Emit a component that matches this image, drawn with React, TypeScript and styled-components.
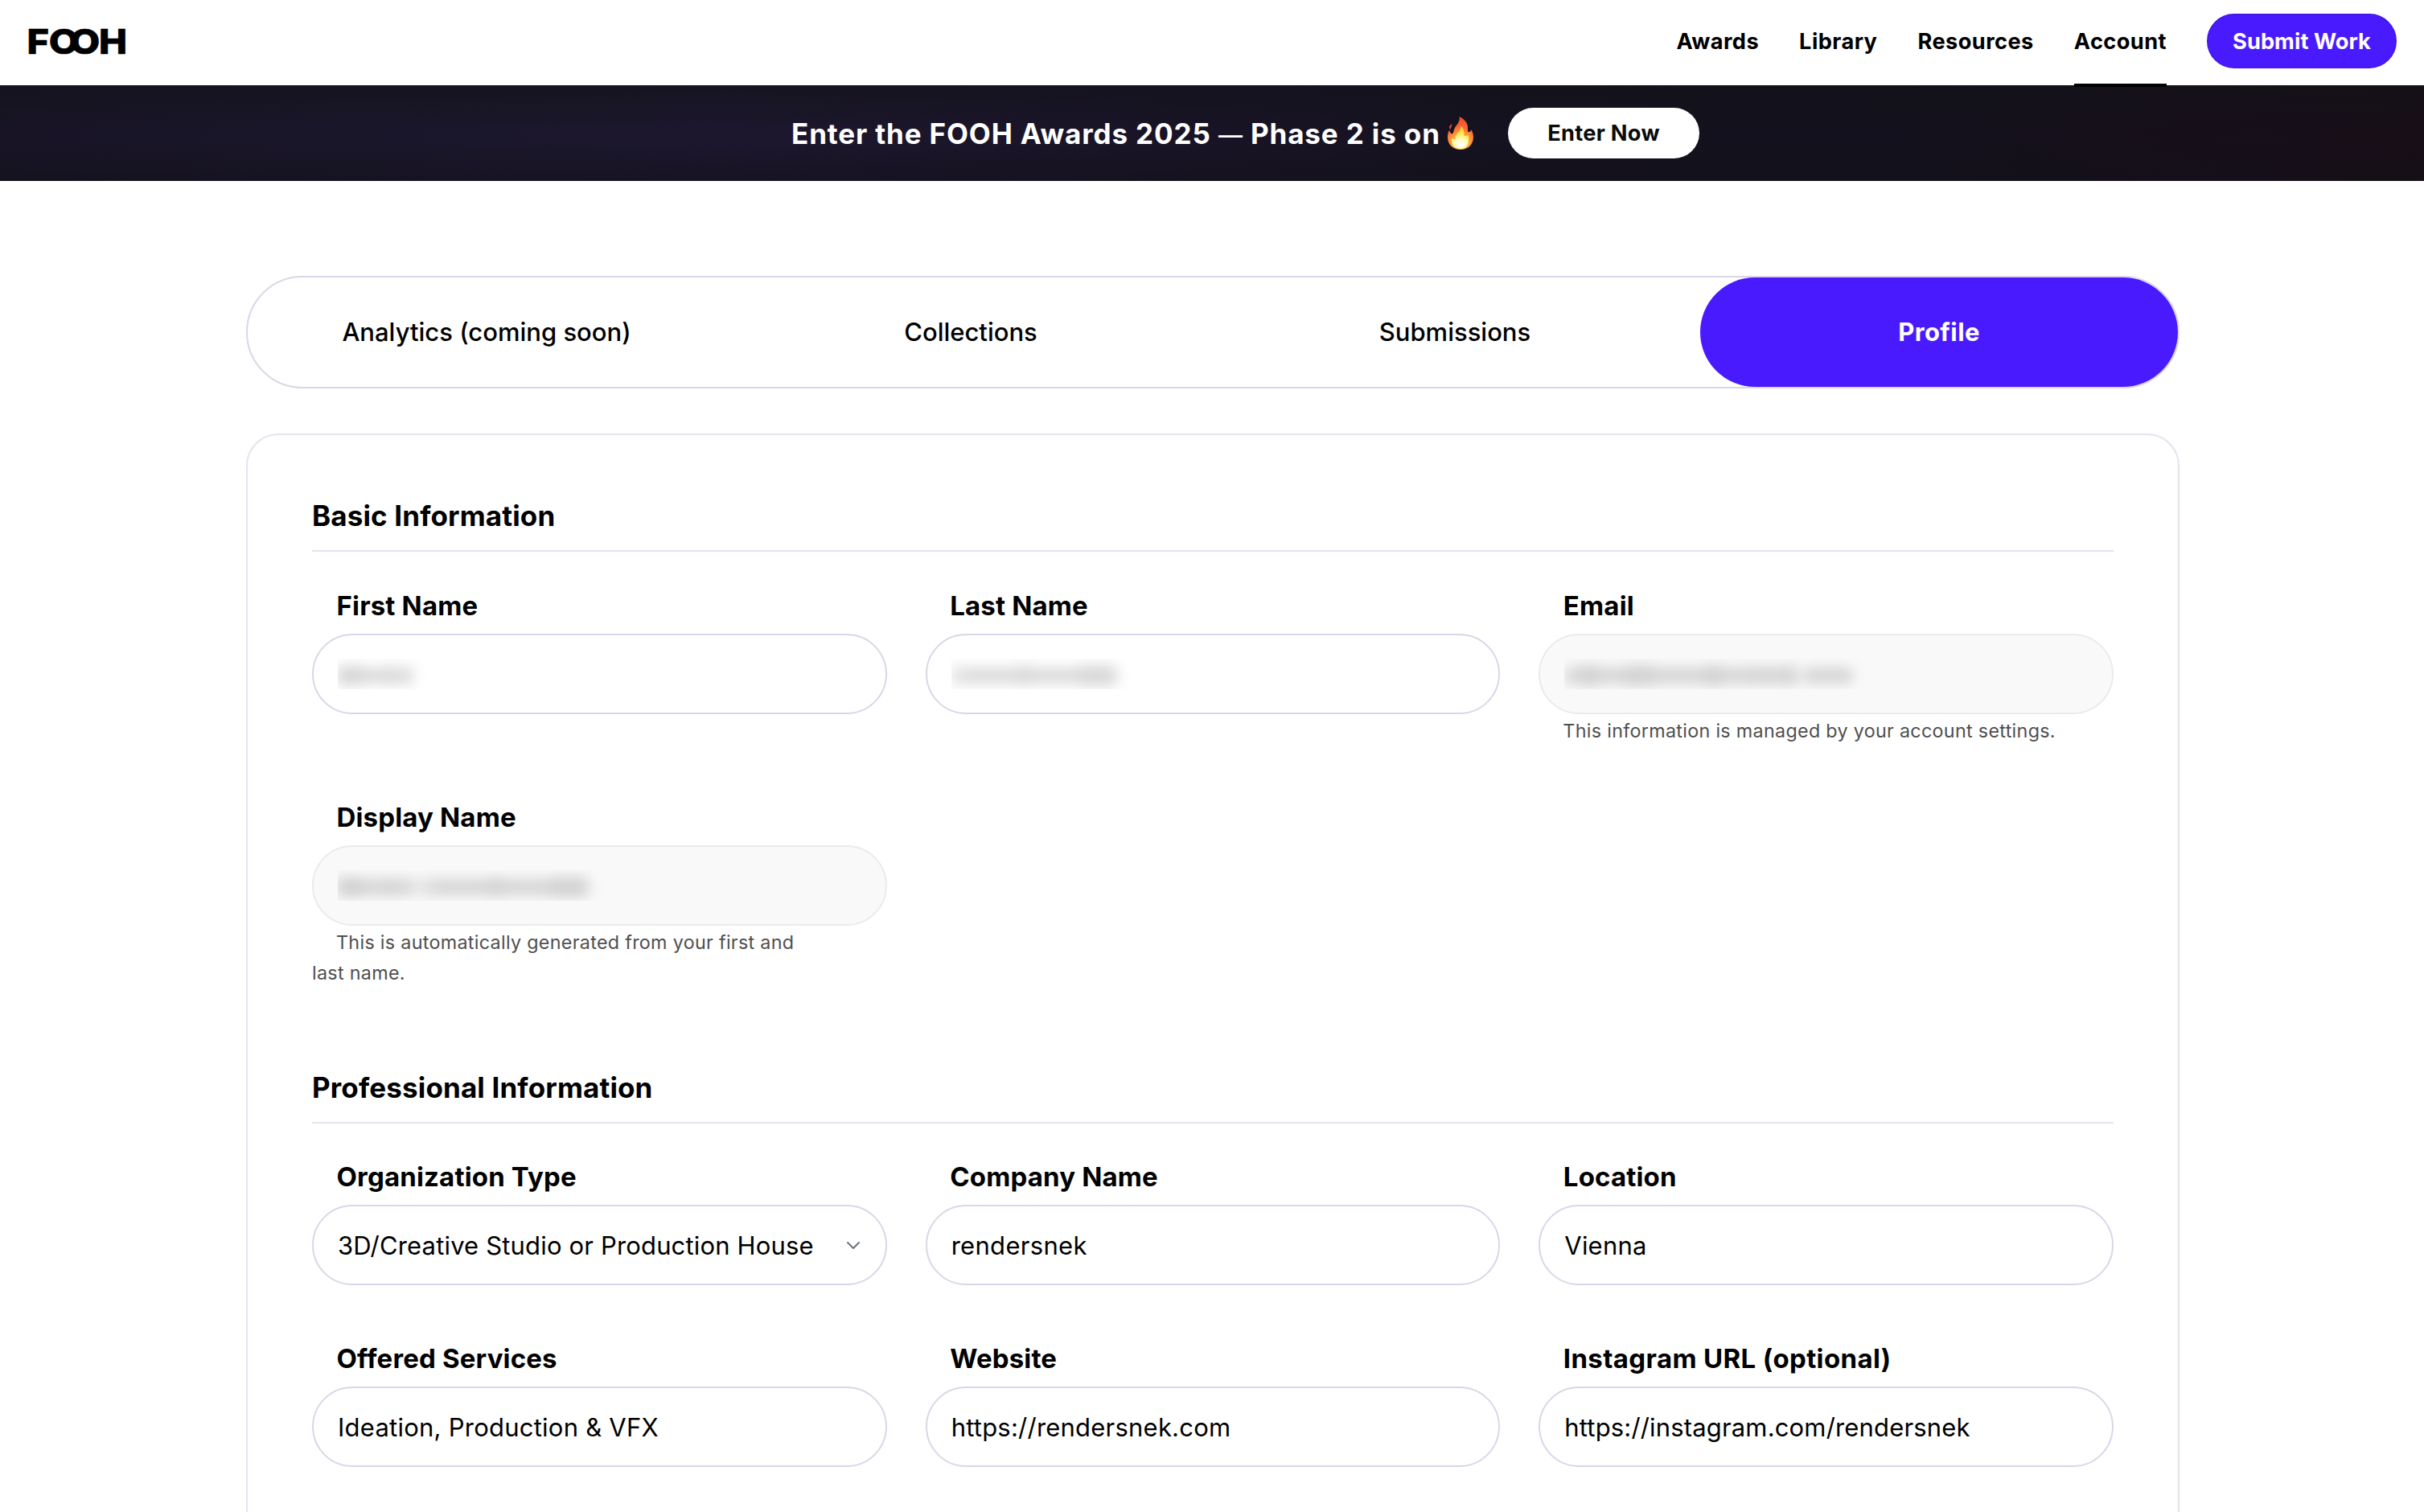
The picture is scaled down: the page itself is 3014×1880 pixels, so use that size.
import React from "react";
import styled, { createGlobalStyle } from "styled-components";

const violet = "#4a1aff";
const fieldBorder = "#d9d7e6";
const cardBorder = "#e5e4ef";

const GlobalStyle = createGlobalStyle`
  *, *::before, *::after { box-sizing: border-box; }
  body {
    margin: 0;
    background: #fff;
    color: #000;
    font-family: Inter, "Liberation Sans", sans-serif;
    -webkit-font-smoothing: antialiased;
  }
`;

const Page = styled.div`
  height: 1880px;
  overflow: hidden;
`;

const Header = styled.header`
  display: flex;
  align-items: center;
  justify-content: space-between;
  height: 106px;
  padding: 0 34px 4px 32px;
  background: #fff;
`;

const Nav = styled.nav`
  display: flex;
  align-items: center;
  gap: 50px;
  height: 100%;
`;

const NavLink = styled.a<{ $active?: boolean }>`
  position: relative;
  display: flex;
  align-items: center;
  height: 100%;
  font-size: 27.2px;
  font-weight: 700;
  letter-spacing: 0.44px;
  white-space: nowrap;

  &::after {
    content: "";
    display: ${(p) => (p.$active ? "block" : "none")};
    position: absolute;
    left: 0;
    right: 0;
    bottom: -6px;
    height: 4px;
    background: #000;
    z-index: 1;
  }
`;

const SubmitButton = styled.button`
  width: 236px;
  height: 68px;
  padding: 0;
  border: 2px solid #4518ea;
  border-radius: 34px;
  background: ${violet};
  color: #fff;
  font: 700 27.2px Inter, sans-serif;
  letter-spacing: 0.05px;
`;

const Banner = styled.section`
  display: flex;
  align-items: center;
  justify-content: flex-start;
  height: 119px;
  padding-left: 984px;
  background:
    linear-gradient(180deg, rgba(18, 18, 24, 0.6), rgba(18, 18, 24, 0) 45%, rgba(18, 18, 24, 0) 60%, rgba(18, 16, 24, 0.5)),
    linear-gradient(90deg, #181426 0%, #1a162a 14%, #1c172d 30%, #191427 46%, #15121f 64%, #13111d 78%, #160f19 90%, #170e17 100%);
`;

const BannerText = styled.span`
  width: 807px;
  color: #fff;
  font-size: 35px;
  font-weight: 650;
  letter-spacing: 0.88px;
  white-space: nowrap;
`;

const Dash = styled.span`
  font-size: 30px;
  font-weight: 500;
`;

const Flame = styled.svg`
  flex: none;
  width: 32px;
  height: 41px;
  margin: 0 43px 0 9px;
`;

const EnterButton = styled.button`
  width: 238px;
  height: 63px;
  padding: 0;
  border: 0;
  border-radius: 32px;
  background: #fff;
  color: #0b0b0b;
  font: 700 27.2px Inter, sans-serif;
  letter-spacing: 0.3px;
`;

const Content = styled.main`
  width: 2404px;
  margin: 118px 0 0 306px;
`;

const Tabs = styled.div`
  display: grid;
  grid-template-columns: repeat(4, 1fr);
  gap: 8px;
  height: 140px;
  border: 2px solid ${fieldBorder};
  border-radius: 70px;
`;

const Tab = styled.button<{ $active?: boolean }>`
  padding: 0 0 2px;
  border: 0;
  border-radius: 68px;
  background: ${(p) => (p.$active ? violet : "transparent")};
  color: ${(p) => (p.$active ? "#fff" : "#000")};
  font: ${(p) => (p.$active ? 700 : 500)} 31px Inter, sans-serif;
  letter-spacing: ${(p) => (p.$active ? "0.4px" : "0")};
`;

const Card = styled.div`
  margin-top: 56px;
  padding: 76px 80px 0;
  height: 1600px;
  border: 2px solid ${cardBorder};
  border-radius: 40px;
`;

const Section = styled.section`
  & + & {
    margin-top: 102px;
  }
`;

const SectionTitle = styled.h2`
  margin: 0;
  padding-bottom: 19px;
  border-bottom: 2px solid ${cardBorder};
  font-size: 35px;
  font-weight: 700;
  line-height: 48px;
  letter-spacing: 0.14px;
`;

const FieldGrid = styled.div<{ $top: number }>`
  display: grid;
  grid-template-columns: repeat(3, 1fr);
  gap: 71px 48px;
  margin-top: ${(p) => p.$top}px;
`;

const Field = styled.div`
  display: flex;
  flex-direction: column;
`;

const Label = styled.label<{ $spacing?: number }>`
  margin-bottom: 15px;
  padding-left: 30.5px;
  font-size: 33px;
  font-weight: 700;
  line-height: 40px;
  letter-spacing: ${(p) => p.$spacing ?? 0.16}px;
`;

const Control = styled.div<{ $disabled?: boolean; $spacing?: number }>`
  display: flex;
  align-items: center;
  justify-content: space-between;
  height: 100px;
  padding: 0 32px 0 30px;
  border: 2px solid ${(p) => (p.$disabled ? "#e8ebee" : fieldBorder)};
  border-radius: 50px;
  background: ${(p) => (p.$disabled ? "#f9f9f9" : "#fff")};
  font-size: 31px;
  letter-spacing: ${(p) => p.$spacing ?? 0.2}px;
  white-space: nowrap;
`;

const Chevron = styled.svg`
  flex: none;
  width: 16px;
  height: 9px;
`;

const Help = styled.p`
  margin: 2px 0 -3px;
  color: #4f4f4f;
  font-size: 23.3px;
  line-height: 38px;
  letter-spacing: 0.31px;
  text-indent: 30px;
`;

const HiddenValue = styled.span`
  flex: 1;
  height: 38px;
  overflow: hidden;
`;

const Smudge = styled.span`
  display: flex;
  align-items: center;
  height: 38px;
  padding-top: 3px;
  filter: blur(8px);
`;

const Blot = styled.span<{ $w: number; $h: number; $tone: number }>`
  width: ${(p) => p.$w}px;
  height: ${(p) => p.$h}px;
  background: rgba(0, 0, 0, ${(p) => p.$tone});
`;

type Mark = [width: number, height: number, tone: number];

const firstNameMarks: Mark[] = [[30, 24, 0.16], [30, 20, 0.14], [8, 24, 0.15], [26, 22, 0.13]];
const lastNameMarks: Mark[] = [[16, 24, 0.1], [66, 20, 0.14], [18, 24, 0.15], [58, 20, 0.14], [20, 26, 0.15], [24, 26, 0.15], [6, 20, 0.1]];

const marks: Record<string, Mark[]> = {
  first: firstNameMarks,
  last: lastNameMarks,
  full: [...firstNameMarks, [12, 20, 0.05], ...lastNameMarks],
  email: [[18, 20, 0.13], [24, 26, 0.15], [34, 20, 0.14], [36, 26, 0.15], [62, 20, 0.14], [22, 26, 0.15], [30, 20, 0.14], [52, 22, 0.14], [10, 26, 0.15], [12, 14, 0.06], [58, 20, 0.14]],
};

function Concealed({ kind }: { kind: string }) {
  return (
    <HiddenValue>
      <Smudge>
        {marks[kind].map(([w, h, tone], i) => (
          <Blot key={i} $w={w} $h={h} $tone={tone} />
        ))}
      </Smudge>
    </HiddenValue>
  );
}

const LogoMark = styled.svg`
  flex: none;
  width: 130px;
  height: 74px;
  font: 800 43px Inter, sans-serif;
  stroke: #000;
  stroke-width: 0.7px;
`;

function Logo() {
  return (
    <LogoMark viewBox="-4 -19.500 130 74" aria-label="FOOH">
      <text transform="translate(-2.5 33.2) scale(1.09 1)">F</text>
      <text transform="translate(24.8 33.2) scale(1.13 1)">O</text>
      <text transform="translate(50.8 33.2) scale(1.13 1)">O</text>
      <text transform="translate(87.1 33.2) scale(1.09 1)">H</text>
    </LogoMark>
  );
}

function Fire() {
  return (
    <Flame viewBox="0 0 32 41">
      <defs>
        <radialGradient id="flameOuter" gradientUnits="userSpaceOnUse" cx="16" cy="33" r="32">
          <stop offset="0" stopColor="#ffd84a" />
          <stop offset="0.35" stopColor="#ffa23a" />
          <stop offset="0.62" stopColor="#fb6a35" />
          <stop offset="1" stopColor="#ea4a2e" />
        </radialGradient>
        <radialGradient id="flameInner" gradientUnits="userSpaceOnUse" cx="16" cy="35" r="24">
          <stop offset="0" stopColor="#ffffff" />
          <stop offset="0.3" stopColor="#fffbc0" />
          <stop offset="0.6" stopColor="#ffe94a" />
          <stop offset="1" stopColor="#ffb43a" />
        </radialGradient>
      </defs>
      <path
        fill="url(#flameOuter)"
        d="M14.6 0C20 2.400 24.800 7.500 25 12.500C25.100 15.400 24.600 17.500 25.400 19C27.200 19.400 28.600 18.400 29.300 16.200C31 18.800 32 22 32 25.500C32 34.500 25.500 41 16 41C6.500 41 0 34.500 0 26C0 22.600 .4 19.600 2 16.800C2.600 19.400 3.800 21.200 6 21.400C8 19.600 7.200 16.800 9 13.800C11.200 10.200 15.800 6.400 14.600 0Z"
      />
      <path fill="#ea4a2e" d="M5 9.200C5.800 12.200 3.600 13 3.400 16C1.400 14.600 1.600 11.200 5 9.200Z" />
      <path
        fill="url(#flameInner)"
        d="M16.400 11.500C19.800 14.500 21 18.500 20.500 23.500C22.600 24.600 24.200 24 25.600 22C27.600 31 25.500 40 16 40C7 40 4 33 5 26.500C6.200 28 7.600 28.600 9.600 27.500C9 22 17 18.500 16.400 11.500Z"
      />
    </Flame>
  );
}

export default function App() {
  return (
    <Page>
      <GlobalStyle />
      <Header>
        <Logo />
        <Nav>
          <NavLink>Awards</NavLink>
          <NavLink>Library</NavLink>
          <NavLink>Resources</NavLink>
          <NavLink $active>Account</NavLink>
          <SubmitButton>Submit Work</SubmitButton>
        </Nav>
      </Header>
      <Banner>
        <BannerText>
          Enter the FOOH Awards 2025 <Dash>—</Dash> Phase 2 is on
        </BannerText>
        <Fire />
        <EnterButton>Enter Now</EnterButton>
      </Banner>
      <Content>
        <Tabs>
          <Tab>Analytics (coming soon)</Tab>
          <Tab>Collections</Tab>
          <Tab>Submissions</Tab>
          <Tab $active>Profile</Tab>
        </Tabs>
        <Card>
          <Section>
            <SectionTitle>Basic Information</SectionTitle>
            <FieldGrid $top={47}>
              <Field>
                <Label>First Name</Label>
                <Control><Concealed kind="first" /></Control>
              </Field>
              <Field>
                <Label>Last Name</Label>
                <Control><Concealed kind="last" /></Control>
              </Field>
              <Field>
                <Label>Email</Label>
                <Control $disabled><Concealed kind="email" /></Control>
                <Help>This information is managed by your account settings.</Help>
              </Field>
              <Field>
                <Label>Display Name</Label>
                <Control $disabled><Concealed kind="full" /></Control>
                <Help>
                  This is automatically generated from your first and
                  <br />
                  last name.
                </Help>
              </Field>
            </FieldGrid>
          </Section>
          <Section>
            <SectionTitle>Professional Information</SectionTitle>
            <FieldGrid $top={46}>
              <Field>
                <Label>Organization Type</Label>
                <Control $spacing={0.16}>
                  3D/Creative Studio or Production House
                  <Chevron viewBox="0 0 16 9" fill="none" stroke="#6b7280" strokeWidth="2" strokeLinecap="round" strokeLinejoin="round">
                    <path d="M1 1L8 8L15 1" />
                  </Chevron>
                </Control>
              </Field>
              <Field>
                <Label>Company Name</Label>
                <Control $spacing={0.3}>rendersnek</Control>
              </Field>
              <Field>
                <Label>Location</Label>
                <Control>Vienna</Control>
              </Field>
              <Field>
                <Label>Offered Services</Label>
                <Control $spacing={0.24}>Ideation, Production &amp; VFX</Control>
              </Field>
              <Field>
                <Label>Website</Label>
                <Control $spacing={0.22}>https://rendersnek.com</Control>
              </Field>
              <Field>
                <Label $spacing={0.36}>Instagram URL (optional)</Label>
                <Control $spacing={0.16}>https://instagram.com/rendersnek</Control>
              </Field>
            </FieldGrid>
          </Section>
        </Card>
      </Content>
    </Page>
  );
}
